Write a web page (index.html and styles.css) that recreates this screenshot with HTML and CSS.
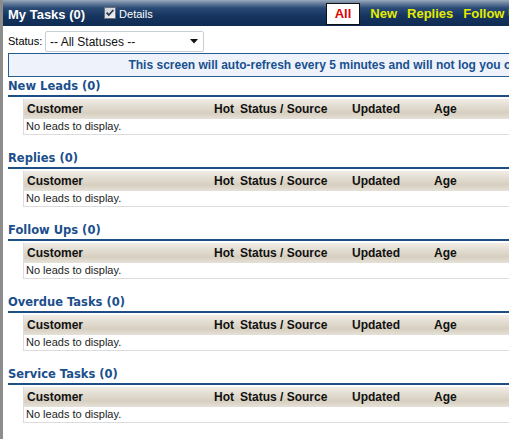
FILE: index.html
```html
<!DOCTYPE html>
<html>
<head>
<meta charset="utf-8">
<link rel="stylesheet" href="styles.css">
</head>
<body>
<div class="page">
  <div class="topbar">
    <div class="title">My Tasks (0)</div>
    <label class="details">
      <svg class="chk" width="12" height="12" viewBox="0 0 12 12">
        <defs><linearGradient id="cg" x1="0" y1="0" x2="1" y2="1"><stop offset="0" stop-color="#c9ced6"/><stop offset="1" stop-color="#f4f5f7"/></linearGradient></defs>
        <rect x="0.5" y="0.5" width="11" height="11" fill="url(#cg)" stroke="#6b7078"/>
        <path d="M2.6 5.6 L4.8 8 L9.4 3" fill="none" stroke="#2a3a52" stroke-width="1.8"/>
      </svg>
      <span>Details</span>
    </label>
    <div class="tabs">
      <span class="tab active">All</span>
      <span class="tab">New</span>
      <span class="tab">Replies</span>
      <span class="tab">Follow Ups</span>
      <span class="tab">Overdue</span>
    </div>
  </div>
  <div class="content">
    <div class="statusrow">
      <span class="lbl">Status:</span>
      <div class="select">
        <span>-- All Statuses --</span>
        <svg width="8" height="5" viewBox="0 0 8 5"><path d="M0 0 H8 L4 4.5 Z" fill="#111"/></svg>
      </div>
    </div>
    <div class="banner">This screen will auto-refresh every 5 minutes and will not log you out</div>

    <div class="section">
      <div class="heading">New Leads (0)</div>
      <div class="grid">
        <div class="hrow"><span>Customer</span><span>Hot</span><span>Status / Source</span><span>Updated</span><span>Age</span></div>
        <div class="row">No leads to display.</div>
      </div>
    </div>
    <div class="section">
      <div class="heading">Replies (0)</div>
      <div class="grid">
        <div class="hrow"><span>Customer</span><span>Hot</span><span>Status / Source</span><span>Updated</span><span>Age</span></div>
        <div class="row">No leads to display.</div>
      </div>
    </div>
    <div class="section">
      <div class="heading">Follow Ups (0)</div>
      <div class="grid">
        <div class="hrow"><span>Customer</span><span>Hot</span><span>Status / Source</span><span>Updated</span><span>Age</span></div>
        <div class="row">No leads to display.</div>
      </div>
    </div>
    <div class="section">
      <div class="heading">Overdue Tasks (0)</div>
      <div class="grid">
        <div class="hrow"><span>Customer</span><span>Hot</span><span>Status / Source</span><span>Updated</span><span>Age</span></div>
        <div class="row">No leads to display.</div>
      </div>
    </div>
    <div class="section">
      <div class="heading">Service Tasks (0)</div>
      <div class="grid">
        <div class="hrow"><span>Customer</span><span>Hot</span><span>Status / Source</span><span>Updated</span><span>Age</span></div>
        <div class="row">No leads to display.</div>
      </div>
    </div>
  </div>
</div>
</body>
</html>
```
FILE: styles.css
```css
html, body {
  margin: 0;
  padding: 0;
  overflow: hidden;
  background: #fff;
}
body {
  font-family: "Liberation Sans", Arial, sans-serif;
  color: #000;
}
.page {
  width: 640px;
  min-height: 439px;
  border-left: 3px solid #8c8c8c;
}
.topbar {
  height: 26px;
  display: flex;
  align-items: center;
  background: linear-gradient(#9aaabd 0, #6d83a0 3px, #2a4b76 8px, #15345e 16px, #0f2b53 100%);
  color: #fff;
}
.title {
  font-weight: bold;
  font-size: 13px;
  margin-left: 5px;
  padding-top: 3px;
}
.details {
  display: flex;
  align-items: center;
  margin-left: 19px;
  font-size: 11px;
  padding-top: 2px;
}
.chk {
  margin-right: 3px;
  margin-top: -3px;
}
.tabs {
  display: flex;
  align-items: center;
  margin-left: 173px;
  padding-top: 1px;
}
.tab {
  font-weight: bold;
  font-size: 13px;
  color: #e4ec00;
  padding: 0 5px;
  line-height: 20px;
}
.tab.active {
  color: #e00000;
  background: #fff;
  border: 1px solid #111;
  padding: 0 8px 0 8px;
  margin-right: 5px;
}
.content {
  padding-left: 5px;
}
.statusrow {
  display: flex;
  align-items: center;
  height: 27px;
}
.lbl {
  font-size: 11px;
  width: 37px;
  padding-top: 3px;
}
.select {
  box-sizing: border-box;
  width: 159px;
  height: 21px;
  margin-top: 4px;
  border: 1px solid #c6ced8;
  border-radius: 2px;
  display: flex;
  align-items: center;
  justify-content: space-between;
  padding: 0 5px 0 4px;
  font-size: 12px;
  color: #111;
}
.banner {
  box-sizing: border-box;
  height: 24px;
  border: 1px solid #2a5c94;
  background: #eef3fb;
  color: #19508f;
  font-weight: bold;
  font-size: 12px;
  text-align: center;
  line-height: 22px;
}
.section {
  margin-bottom: 14px;
}
.heading {
  font-family: "DejaVu Sans", Verdana, sans-serif;
  font-weight: bold;
  font-size: 11.5px;
  color: #1b4f8c;
  height: 18px;
  line-height: 19px;
  border-bottom: 2px solid #1d4f84;
  margin-bottom: 2px;
}
.grid {
  margin-left: 15px;
  border-left: 1px solid #dcdcdc;
  border-bottom: 1px solid #dcdcdc;
}
.hrow {
  display: grid;
  grid-template-columns: 187px 26px 112px 82px 1fr;
  height: 20px;
  align-items: center;
  background: linear-gradient(#f1ede6 0, #e3ddd2 35%, #d7cfc0 70%, #e6e1d8 100%);
  font-weight: bold;
  font-size: 12px;
  color: #111;
}
.hrow span {
  padding-left: 3px;
}
.row {
  height: 15px;
  line-height: 15px;
  font-size: 11px;
  color: #222;
  padding-left: 2px;
}
```
